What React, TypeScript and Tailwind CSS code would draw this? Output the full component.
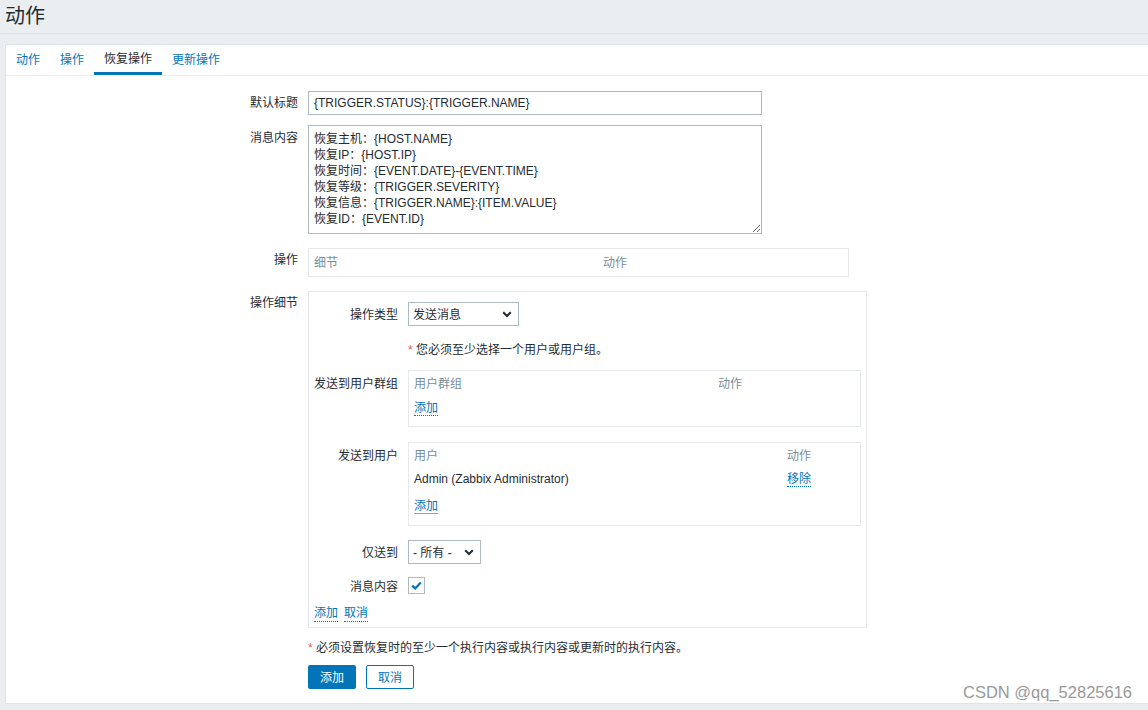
import React from "react";

const FONT = '"Liberation Sans", Arial, "Noto Sans CJK SC", sans-serif';

function Chevron() {
  return (
    <svg width="10" height="7" viewBox="0 0 10 7" className="shrink-0">
      <path d="M1.2 1.2 L5 5 L8.8 1.2" fill="none" stroke="#1f2c33" strokeWidth="2" />
    </svg>
  );
}

function Select({ value, width }: { value: string; width: string }) {
  return (
    <div className={`${width} h-[24px] border border-[#acbbc2] bg-white flex items-center justify-between pl-[4px] pr-[6px] text-[12px] text-[#1f2c33]`}>
      <span className="pt-[2px]">{value}</span>
      <Chevron />
    </div>
  );
}

function DottedLink({ children, solid }: { children: React.ReactNode; solid?: boolean }) {
  return (
    <span
      className={`text-[#0275b8] leading-[15px] border-b ${solid ? "border-solid border-[#6fa9cf]" : "border-dotted border-[#0275b8]"}`}
    >
      {children}
    </span>
  );
}

export default function App() {
  const msg = [
    "恢复主机：{HOST.NAME}",
    "恢复IP：{HOST.IP}",
    "恢复时间：{EVENT.DATE}-{EVENT.TIME}",
    "恢复等级：{TRIGGER.SEVERITY}",
    "恢复信息：{TRIGGER.NAME}:{ITEM.VALUE}",
    "恢复ID：{EVENT.ID}",
  ].join("\n");

  return (
    <div
      className="relative w-[1148px] h-[710px] bg-[#ebeef0] overflow-hidden text-[12px] text-[#1f2c33]"
      style={{ fontFamily: FONT }}
    >
      {/* header */}
      <div className="h-[34px] border-b border-[#dde2e5] pl-[5px]">
        <div className="text-[20px] leading-[30px] pt-[1px] text-[#1f2c33]">动作</div>
      </div>

      {/* panel */}
      <div className="mt-[10px] ml-[5px] h-[660px] bg-white border border-r-0 border-[#dfe4e7]">
        {/* tabs */}
        <div className="h-[31px] border-b border-[#ebeef0] flex">
          <div className="px-[10px] pt-[2px] leading-[27px] text-[#0275b8]">动作</div>
          <div className="px-[10px] pt-[2px] leading-[27px] text-[#0275b8]">操作</div>
          <div className="px-[10px] pt-[2px] leading-[25px] text-[#1f2c33] border-b-[3px] border-[#0275b8]">恢复操作</div>
          <div className="px-[10px] pt-[2px] leading-[27px] text-[#0275b8]">更新操作</div>
        </div>

        {/* form */}
        <div className="pt-[15px] grid grid-cols-[292px_1fr] gap-x-[10px]">
          {/* 默认标题 */}
          <div className="text-right leading-[24px]">默认标题</div>
          <div>
            <div className="w-[454px] h-[24px] border border-[#acbbc2] px-[5px] leading-[22px]">
              {"{TRIGGER.STATUS}:{TRIGGER.NAME}"}
            </div>
          </div>

          {/* 消息内容 */}
          <div className="text-right leading-[24px] mt-[11px]">消息内容</div>
          <div className="mt-[10px]">
            <textarea
              readOnly
              defaultValue={msg}
              className="block w-[454px] h-[109px] border border-[#acbbc2] px-[5px] pt-[5px] pb-[3px] leading-[16px] text-[12px] text-[#1f2c33] resize outline-none"
              style={{ fontFamily: FONT }}
            />
          </div>

          {/* 操作 */}
          <div className="text-right leading-[22px] mt-[15px]">操作</div>
          <div className="mt-[14px]">
            <div className="w-[541px] h-[29px] border border-[#e5e9eb] flex pt-[6px] px-[5px] leading-[16px] text-[#768d99]">
              <div className="w-[289px]">细节</div>
              <div>动作</div>
            </div>
          </div>

          {/* 操作细节 */}
          <div className="text-right leading-[24px] mt-[14px]">操作细节</div>
          <div className="mt-[14px]">
            <div className="w-[559px] h-[337px] border border-[#e5e9eb] pt-[10px]">
              <div className="grid grid-cols-[89px_1fr] gap-x-[10px]">
                <div className="text-right leading-[24px] pt-[1px]">操作类型</div>
                <div>
                  <Select value="发送消息" width="w-[111px]" />
                </div>

                <div />
                <div className="mt-[15px] leading-[16px]">
                  <span className="text-[#e45959]">*</span> 您必须至少选择一个用户或用户组。
                </div>

                <div className="text-right leading-[16px] mt-[18px] whitespace-nowrap -ml-[10px]">发送到用户群组</div>
                <div className="mt-[12px]">
                  <div className="w-[453px] h-[57px] border border-[#e5e9eb] pt-[5px] px-[5px]">
                    <div className="flex leading-[16px] text-[#768d99]">
                      <div className="w-[304px]">用户群组</div>
                      <div>动作</div>
                    </div>
                    <div className="mt-[8px] leading-[16px]">
                      <DottedLink>添加</DottedLink>
                    </div>
                  </div>
                </div>

                <div className="text-right leading-[16px] mt-[21px]">发送到用户</div>
                <div className="mt-[15px]">
                  <div className="w-[453px] h-[84px] border border-[#e5e9eb] pt-[5px] px-[5px]">
                    <div className="flex leading-[16px] text-[#768d99]">
                      <div className="w-[373px]">用户</div>
                      <div>动作</div>
                    </div>
                    <div className="flex leading-[16px] mt-[7px]">
                      <div className="w-[373px]">Admin (Zabbix Administrator)</div>
                      <div>
                        <DottedLink>移除</DottedLink>
                      </div>
                    </div>
                    <div className="mt-[11px] leading-[16px]">
                      <DottedLink solid>添加</DottedLink>
                    </div>
                  </div>
                </div>

                <div className="text-right leading-[24px] pt-[1px] mt-[14px]">仅送到</div>
                <div className="mt-[14px]">
                  <Select value="- 所有 -" width="w-[73px]" />
                </div>

                <div className="text-right leading-[17px] pt-[2px] mt-[12px]">消息内容</div>
                <div className="mt-[12px]">
                  <div className="w-[17px] h-[17px] border border-[#acbbc2] flex items-center justify-center">
                    <svg width="11" height="9" viewBox="0 0 11 9">
                      <path d="M1.2 4.6 L4.2 7.4 L9.8 1.4" fill="none" stroke="#0275b8" strokeWidth="2.2" />
                    </svg>
                  </div>
                </div>
              </div>
              <div className="mt-[10px] pl-[5px] flex gap-[6px] leading-[16px]">
                <DottedLink>添加</DottedLink>
                <DottedLink>取消</DottedLink>
              </div>
            </div>
          </div>

          {/* bottom message */}
          <div />
          <div className="mt-[12px] leading-[16px]">
            <span className="text-[#e45959]">*</span> 必须设置恢复时的至少一个执行内容或执行内容或更新时的执行内容。
          </div>

          <div />
          <div className="mt-[9px] flex gap-[10px]">
            <div className="w-[48px] h-[24px] bg-[#0275b8] text-white flex items-center justify-center rounded-[2px] pt-[1px]">添加</div>
            <div className="w-[48px] h-[24px] bg-white border border-[#0275b8] text-[#0275b8] flex items-center justify-center rounded-[2px] pt-[1px]">取消</div>
          </div>
        </div>
      </div>

      {/* watermark */}
      <div className="absolute left-[963px] top-[681px] text-[16.5px] leading-[22px] text-[#999999] whitespace-nowrap">
        CSDN @qq_52825616
      </div>
    </div>
  );
}
